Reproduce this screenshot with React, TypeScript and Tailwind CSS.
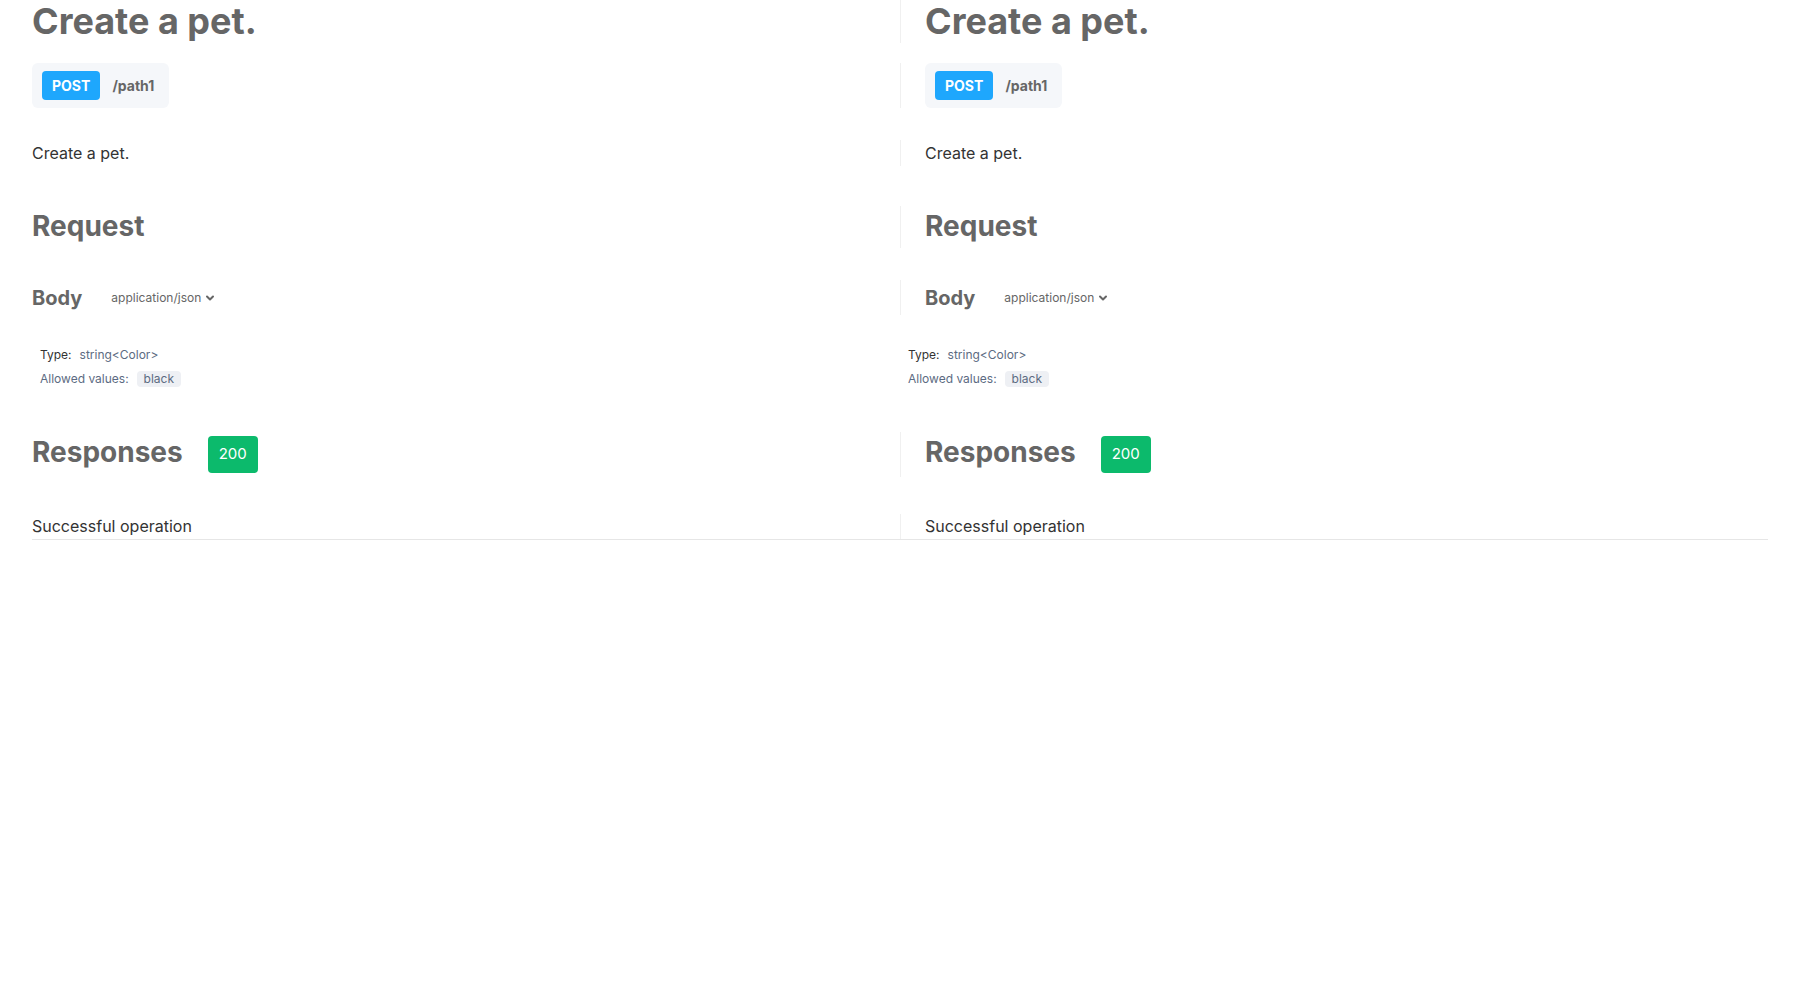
import { ChevronDown } from "lucide-react";

const FONT = { fontFamily: "Inter, 'Noto Sans', sans-serif" };

function Block({
  bordered,
  className,
  children,
}: {
  bordered: boolean;
  className: string;
  children: React.ReactNode;
}) {
  return (
    <div className={`${bordered ? "border-l border-[#f0f0f0] pl-6" : ""} ${className}`}>
      {children}
    </div>
  );
}

function DocColumn({ bordered }: { bordered: boolean }) {
  return (
    <div className="flex flex-col">
      <Block bordered={bordered} className="h-[43px]">
        <h1 className="text-[36px] font-bold leading-[43px] text-[#666666]">Create a pet.</h1>
      </Block>

      <Block bordered={bordered} className="mt-5 flex">
        <div className="flex h-[45px] items-center gap-3 rounded-md bg-[#f5f7fa] pl-2.5 pr-[15px]">
          <span className="flex h-[29px] items-center rounded-[4px] bg-[#1ea7fd] px-2.5 text-sm font-bold text-white">
            POST
          </span>
          <span className="text-sm font-bold text-[#666666]">/path1</span>
        </div>
      </Block>

      <Block bordered={bordered} className="mt-8 h-[26px]">
        <p className="text-base leading-[26px] text-[#333333]">Create a pet.</p>
      </Block>

      <Block bordered={bordered} className="mt-10 h-[42px]">
        <h2 className="text-[28px] font-bold leading-[40px] text-[#666666]">Request</h2>
      </Block>

      <Block bordered={bordered} className="mt-8 flex h-[35px] items-center gap-[29px]">
        <h3 className="text-xl font-bold text-[#666666]">Body</h3>
        <button
          type="button"
          className="flex items-center gap-[3px] pt-px text-xs text-[#666666]"
        >
          application/json
          <ChevronDown size={12} strokeWidth={4} />
        </button>
      </Block>

      <div className="mt-7 flex flex-col pl-2 text-xs">
        <div className="flex h-6 items-center gap-2">
          <span className="text-[#333333]">Type:</span>
          <span className="text-[#5c6b82]">string&lt;Color&gt;</span>
        </div>
        <div className="flex h-6 items-center gap-2">
          <span className="text-[#5c6b82]">Allowed values:</span>
          <span className="flex h-4 items-center rounded-[4px] bg-[#eef0f4] px-[7px] text-[#5c6b82]">
            black
          </span>
        </div>
      </div>

      <Block bordered={bordered} className="mt-[41px] flex h-[45px] items-center gap-[25px]">
        <h2 className="pb-[6px] text-[28px] font-bold leading-[40px] text-[#666666]">Responses</h2>
        <span className="flex h-[37px] w-[50px] items-center justify-center rounded-[4px] bg-[#0cba6c] text-[15px] text-white">
          200
        </span>
      </Block>

      <Block bordered={bordered} className="mt-[37px] h-[25px]">
        <p className="text-base leading-[25px] text-[#333333]">Successful operation</p>
      </Block>
    </div>
  );
}

export default function App() {
  return (
    <div className="min-h-screen bg-white" style={FONT}>
      <div className="mx-8 grid grid-cols-2 border-b border-[#e6e6e6]">
        <DocColumn bordered={false} />
        <DocColumn bordered />
      </div>
    </div>
  );
}
